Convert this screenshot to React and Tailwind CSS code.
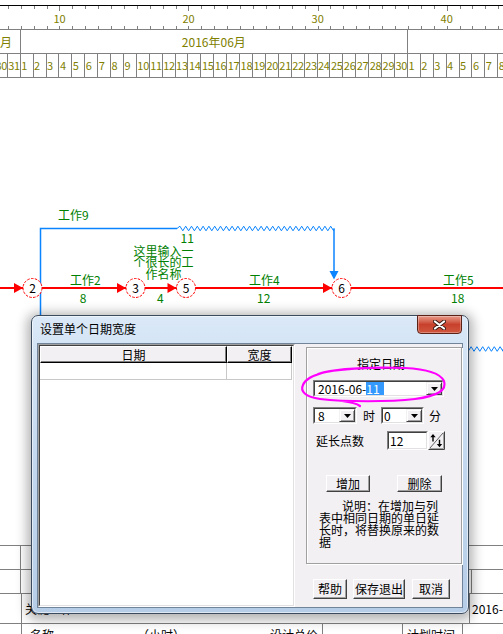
import React from "react";

const dayCells = [
  30,
  31,
  ...Array.from({ length: 30 }, (_, i) => i + 1),
  ...Array.from({ length: 8 }, (_, i) => i + 1),
];
const rulerLabels = { 5: "10", 15: "20", 25: "30", 35: "40" };

function zigzag(x0, x1, y, step = 2.9, amp = 2.3) {
  let d = `M${x0} ${y}`;
  let up = true;
  for (let x = x0 + step; x < x1; x += step) {
    d += ` L${x.toFixed(2)} ${up ? y - amp : y + amp}`;
    up = !up;
  }
  return d + ` L${x1} ${y}`;
}

const nodes = [
  { n: 2, cx: 32.5 },
  { n: 3, cx: 135.5 },
  { n: 5, cx: 186 },
  { n: 6, cx: 341.5 },
];

function WinButton({ className, children }) {
  return (
    <div
      className={
        "flex items-center justify-center bg-[#f3f0f4] border border-t-white border-l-white border-r-[#404040] border-b-[#404040] shadow-[inset_-1px_-1px_0_#a0a0a0] text-[12px] leading-[12px] text-black " +
        className
      }
    >
      {children}
    </div>
  );
}

function DropArrow() {
  return (
    <div className="w-[16px] h-full shrink-0 flex items-center justify-center bg-[#f3f0f4] border border-t-[#f3f0f4] border-l-[#f3f0f4] border-r-[#404040] border-b-[#404040] shadow-[inset_1px_1px_0_white,inset_-1px_-1px_0_#a0a0a0]">
      <svg width="7" height="4" viewBox="0 0 7 4">
        <path d="M0 0H7L3.5 4Z" fill="black" />
      </svg>
    </div>
  );
}

function Sunken({ className, children }) {
  return (
    <div
      className={
        "border border-t-[#808080] border-l-[#808080] border-r-white border-b-white " +
        className
      }
    >
      <div className="h-full flex items-center bg-white border border-t-[#404040] border-l-[#404040] border-r-[#e3e0e4] border-b-[#e3e0e4]">
        {children}
      </div>
    </div>
  );
}

export default function App() {
  return (
    <div className="relative w-[503px] h-[634px] overflow-hidden bg-white font-['Noto_Sans_CJK_SC',sans-serif]">
      {/* time scale */}
      <div className="h-[5px]" />
      <div className="h-[24px] border-t border-black overflow-hidden">
        <div className="flex h-full ml-[-5.12px]">
          {dayCells.map((d, i) => (
            <div key={i} className="w-[12.91px] shrink-0 h-full flex flex-col">
              <div className="h-[5px]">
                <div className={rulerLabels[i] ? "w-px h-[5px] bg-[#808080]" : "w-px h-[3px] bg-[#808080]"} />
              </div>
              <div className="mt-[2px] h-[11px] whitespace-nowrap text-[11px] leading-[11px] text-[#808000]">
                {rulerLabels[i] && <span className="ml-[-6px]">{rulerLabels[i]}</span>}
              </div>
              <div className="mt-auto w-px h-[3px] bg-[#808080]" />
            </div>
          ))}
        </div>
      </div>
      <div className="h-[25px] border-t border-b border-[#808080] overflow-hidden">
        <div className="flex h-full ml-[-5.12px] text-[12px] text-[#808000]">
          <div className="w-[25.82px] shrink-0 border-r border-[#808080] flex items-center justify-end pr-[7.7px] overflow-hidden whitespace-nowrap">
            2016年05月
          </div>
          <div className="w-[387.3px] shrink-0 border-r border-[#808080] flex items-center justify-center">
            2016年06月
          </div>
          <div className="w-[120px] shrink-0" />
        </div>
      </div>
      <div className="h-[24px] border-b border-[#808080] overflow-hidden">
        <div className="flex h-full ml-[-5.12px]">
          {dayCells.map((d, i) => (
            <div
              key={i}
              className="w-[12.91px] shrink-0 h-full border-r border-[#808080] flex items-center pl-[0.5px] text-[11px] tracking-[-0.3px] text-[#808000] whitespace-nowrap"
            >
              {d}
            </div>
          ))}
        </div>
      </div>

      {/* network diagram */}
      <div className="relative h-[467px]">
        <svg className="absolute inset-0" width="503" height="467" viewBox="0 78 503 467">
          <line x1="0" y1="288" x2="503" y2="288" stroke="#ff0000" strokeWidth="2" />
          <path d="M40.5 545 V228.5 H177" stroke="#0a84ff" strokeWidth="1.5" fill="none" />
          <path d={zigzag(177, 334, 228.5)} stroke="#0a84ff" strokeWidth="1" fill="none" />
          <path d="M334 228.5 V272" stroke="#0a84ff" strokeWidth="1.5" fill="none" />
          <path d="M329.5 271 L338.5 271 L334 279.5 Z" fill="#0a84ff" />
          <path d={zigzag(300, 503, 349)} stroke="#0a84ff" strokeWidth="1" fill="none" />
          {nodes.map((nd) => (
            <g key={nd.n}>
              <path
                d={`M${nd.cx - 18.5} 283 L${nd.cx - 18.5} 293 L${nd.cx - 9.5} 288 Z`}
                fill="#ff0000"
              />
              <circle
                cx={nd.cx}
                cy="288"
                r="9.5"
                fill="white"
                stroke="#ff0000"
                strokeWidth="1"
                strokeDasharray="2.6 1.3"
              />
              <text
                x={nd.cx}
                y="292.5"
                textAnchor="middle"
                fontSize="12"
                fontFamily="'Noto Sans CJK SC', sans-serif"
                fill="black"
              >
                {nd.n}
              </text>
            </g>
          ))}
        </svg>
        <div className="absolute left-[58px] top-[131px] text-[12px] leading-[12px] text-[#008000]">工作9</div>
        <div className="absolute left-[180.5px] top-[153.5px] text-[12px] leading-[12px] text-[#008000]">11</div>
        <div className="absolute left-[132.5px] top-[166.5px] w-[62px] text-center text-[12px] leading-[11.5px] text-[#008000]">
          这里输入一
          <br />
          个很长的工
          <br />
          作名称
        </div>
        <div className="absolute left-[70px] top-[196px] text-[12px] leading-[12px] text-[#008000]">工作2</div>
        <div className="absolute left-[79.7px] top-[213.5px] text-[12px] leading-[12px] text-[#008000]">8</div>
        <div className="absolute left-[157px] top-[213.5px] text-[12px] leading-[12px] text-[#008000]">4</div>
        <div className="absolute left-[249px] top-[196px] text-[12px] leading-[12px] text-[#008000]">工作4</div>
        <div className="absolute left-[257px] top-[213.5px] text-[12px] leading-[12px] text-[#008000]">12</div>
        <div className="absolute left-[443px] top-[196px] text-[12px] leading-[12px] text-[#008000]">工作5</div>
        <div className="absolute left-[451px] top-[213.5px] text-[12px] leading-[12px] text-[#008000]">18</div>
      </div>

      {/* table below */}
      <div className="h-[24px] border-t border-[#808080] flex">
        <div className="w-[21px] border-r border-[#808080]" />
      </div>
      <div className="h-[24px] border-t border-[#808080] flex">
        <div className="w-[21px] border-r border-[#808080]" />
        <div className="w-[451px] border-r border-[#808080]" />
      </div>
      <div className="h-[30px] border-t border-[#808080] flex text-[12px] text-black">
        <div className="w-[22px] border-r border-[#808080]" />
        <div className="w-[448px] border-r border-[#808080] flex items-center pl-[3px]">关键工作</div>
        <div className="flex-1 flex items-center pl-[2px] whitespace-nowrap overflow-hidden">2016-06-01</div>
      </div>
      <div className="h-[20px] border-t border-[#808080] flex text-[12px] leading-[12px] text-black">
        <div className="w-[22px] border-r border-[#808080]" />
        <div className="w-[301px] border-r border-[#808080] flex pt-[5px] whitespace-nowrap">
          <span className="w-[115px] pl-[8px]">名称</span>
          <span className="w-[133px]">（小时）</span>
          <span>设计总价</span>
        </div>
        <div className="w-[80px] border-r border-[#808080]" />
        <div className="w-[60px] border-r border-[#808080] pt-[5px] pl-[4px] whitespace-nowrap">计划时间</div>
      </div>

      {/* dialog */}
      <div className="absolute left-[31px] top-[315px] w-[438px] h-[299px] rounded-[7px] border border-[#3b4a5c] bg-linear-to-b from-[#dae8f7] via-[#c3d8ef] to-[#b6cde8] shadow-[0_2px_12px_4px_rgba(0,0,0,0.3),inset_0_0_0_1px_rgba(255,255,255,0.55)] flex flex-col">
        <div className="relative h-[27px] shrink-0 pl-[8px] pt-[7px] text-[12px] leading-[12px] text-black">
          设置单个日期宽度
          <div className="absolute right-[6px] top-[-1px] w-[45px] h-[19px] rounded-b-[4px] border border-[#5a2217] bg-linear-to-b from-[#e79a8a] via-[#c8402b] to-[#d0563f] shadow-[inset_0_0_0_1px_rgba(255,255,255,0.3)] flex items-center justify-center">
            <svg width="13" height="10" viewBox="0 0 13 10">
              <path d="M2 1.5 L11 8.5 M11 1.5 L2 8.5" stroke="#3b1c16" strokeWidth="4" strokeLinecap="round" />
              <path d="M2 1.5 L11 8.5 M11 1.5 L2 8.5" stroke="white" strokeWidth="2.2" strokeLinecap="round" />
            </svg>
          </div>
        </div>
        <div className="mx-[5px] mb-[5px] flex-1 min-h-0 border border-[#71849a] bg-[#f3f0f4] flex text-[12px] text-black">
          {/* list */}
          <div className="w-[257px] h-full shrink-0 border border-t-[#a0a0a0] border-l-[#a0a0a0] border-r-white border-b-white">
            <div className="h-full bg-white border border-t-[#404040] border-l-[#404040] border-r-[#e3e0e4] border-b-[#e3e0e4]">
              <div className="flex h-[17px]">
                <div className="w-[187px] flex items-center justify-center bg-[#f3f0f4] border border-t-white border-l-white border-r-black border-b-black shadow-[inset_-1px_-1px_0_#808080] leading-[12px]">
                  日期
                </div>
                <div className="w-[65px] flex items-center justify-center bg-[#f3f0f4] border border-t-white border-l-white border-r-black border-b-black shadow-[inset_-1px_-1px_0_#808080] leading-[12px]">
                  宽度
                </div>
              </div>
              <div className="flex h-[17px]">
                <div className="w-[187px] border-r border-b border-[#c8c8c8]" />
                <div className="w-[65px] border-r border-b border-[#c8c8c8]" />
              </div>
            </div>
          </div>

          {/* right side */}
          <div className="ml-[11px] w-[156px] flex flex-col">
            <div className="relative mt-[3px] h-[217px] border border-[#a0a0a0] shadow-[inset_1px_1px_0_white,1px_1px_0_white] flex flex-col">
              <div className="mt-[10px] pl-[50px] h-[12px] leading-[12px]">指定日期</div>
              <Sunken className="mt-[10px] ml-[6px] w-[131px] h-[17px]">
                <div className="flex-1 pl-[3px] leading-[13px] whitespace-nowrap">
                  2016-06-
                  <span className="inline-block bg-[#3399ff] text-white pr-[4px]">11</span>
                </div>
                <DropArrow />
              </Sunken>
              <div className="mt-[10px] ml-[6px] h-[17px] flex items-center">
                <Sunken className="w-[44px] h-[17px]">
                  <div className="flex-1 pl-[3px] leading-[13px]">8</div>
                  <DropArrow />
                </Sunken>
                <div className="ml-[6px] leading-[12px]">时</div>
                <Sunken className="ml-[6px] w-[43px] h-[17px]">
                  <div className="flex-1 pl-[1px] leading-[13px]">0</div>
                  <DropArrow />
                </Sunken>
                <div className="ml-[5px] leading-[12px]">分</div>
              </div>
              <div className="mt-[7px] h-[19px] flex items-center">
                <div className="ml-[9px] leading-[12px] whitespace-nowrap">延长点数</div>
                <Sunken className="ml-[23px] w-[41px] h-[19px]">
                  <div className="pl-[1px] leading-[13px]">12</div>
                </Sunken>
                <svg width="17" height="19" viewBox="0 0 17 19">
                  <rect x="0" y="0" width="17" height="19" fill="#f3f0f4" />
                  <path d="M0.5 18.5 V0.5 H16.5" stroke="white" fill="none" />
                  <path d="M0.5 18.5 H16.5 V0.5" stroke="#404040" fill="none" />
                  <path d="M1.5 17.5 H15.5 V1.5" stroke="#a0a0a0" fill="none" />
                  <path d="M2 17 L15 2" stroke="#404040" strokeWidth="0.8" />
                  <path d="M5 3 L2.3 6.3 H4.3 V10.5 H5.7 V6.3 H7.7 Z" fill="black" />
                  <path d="M11.5 16.2 L8.8 12.9 H10.8 V8.7 H12.2 V12.9 H14.2 Z" fill="black" />
                </svg>
              </div>
              <div className="mt-[25px] h-[17px] flex">
                <WinButton className="ml-[19px] w-[44px] h-[17px]">增加</WinButton>
                <WinButton className="ml-[27px] w-[45px] h-[17px]">删除</WinButton>
              </div>
              <div className="mt-[8px] ml-[12px] w-[121px] leading-[12px] indent-[23px] break-all">
                说明：在增加与列表中相同日期的单日延长时，将替换原来的数据
              </div>
              <svg
                className="absolute left-[-9px] top-[17px] overflow-visible pointer-events-none"
                width="160"
                height="48"
                viewBox="298 365 160 48"
              >
                <path
                  d="M318 374 C335 369, 370 367, 405 368 C425 369, 440 373, 444 381 C447 390, 438 396, 415 399 C390 402, 345 402, 320 399 C305 397, 300 391, 303 385 C305 379, 312 376, 322 373 M342 401 C350 402, 356 403, 360 406"
                  stroke="#ff00ff"
                  strokeWidth="2.2"
                  fill="none"
                  strokeLinecap="round"
                />
              </svg>
            </div>
            <div className="mt-[15px] ml-[7px] flex">
              <WinButton className="w-[34px] h-[20px]">帮助</WinButton>
              <WinButton className="ml-[6px] w-[52px] h-[20px]">保存退出</WinButton>
              <WinButton className="ml-[7px] w-[38px] h-[20px]">取消</WinButton>
            </div>
          </div>
        </div>
      </div>
    </div>
  );
}
